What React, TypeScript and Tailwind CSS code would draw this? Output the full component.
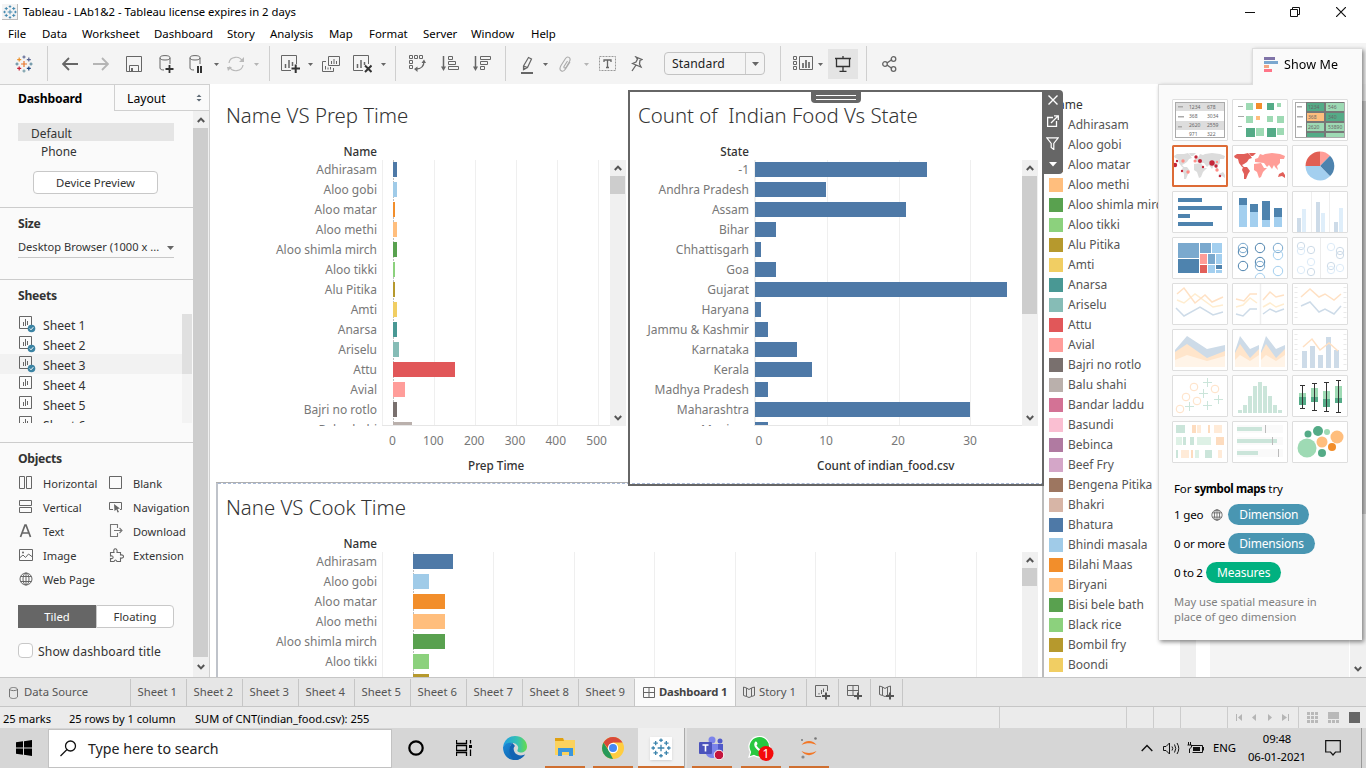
import type { ReactNode } from "react";

type Box = { w: number; h: number; vb?: string; className?: string; children: ReactNode };

function Ico({ w, h, vb, className, children }: Box) {
  return (
    <svg width={w} height={h} viewBox={vb ?? `0 0 ${w} ${h}`} fill="none" className={`shrink-0 ${className ?? ""}`}>
      {children}
    </svg>
  );
}

const palette = [
  "#4e79a7", "#a0cbe8", "#f28e2b", "#ffbe7d", "#59a14f", "#8cd17d", "#b6992d", "#f1ce63", "#499894", "#86bcb6",
  "#e15759", "#ff9d9a", "#79706e", "#bab0ac", "#d37295", "#fabfd2", "#b07aa1", "#d4a6c8", "#9d7660", "#d7b5a6",
];

const foods = [
  "Adhirasam", "Aloo gobi", "Aloo matar", "Aloo methi", "Aloo shimla mirch", "Aloo tikki", "Alu Pitika", "Amti",
  "Anarsa", "Ariselu", "Attu", "Avial", "Bajri no rotlo", "Balu shahi", "Bandar laddu", "Basundi", "Bebinca",
  "Beef Fry", "Bengena Pitika", "Bhakri", "Bhatura", "Bhindi masala", "Bilahi Maas", "Biryani", "Bisi bele bath",
  "Black rice", "Bombil fry", "Boondi",
];

const states = [
  "-1", "Andhra Pradesh", "Assam", "Bihar", "Chhattisgarh", "Goa", "Gujarat", "Haryana", "Jammu & Kashmir",
  "Karnataka", "Kerala", "Madhya Pradesh", "Maharashtra", "Manipur",
];

/* ---------- toolbar ---------- */

function Sparkle({ s, multi }: { s: number; multi?: boolean }) {
  const c = multi
    ? ["#e8762c", "#5b6591", "#7199a6", "#5b879b", "#eb912c", "#1f447e", "#59879b", "#c72037", "#5b6591"]
    : Array(9).fill("#3d85ad");
  const p: [number, number, number][] = [
    [9, 9, 3], [9, 2, 1.6], [9, 16, 1.6], [2, 9, 1.6], [4.2, 4.6, 2], [13.8, 13.4, 2], [16, 9, 1.6], [4.2, 13.4, 2], [13.8, 4.6, 2],
  ];
  return (
    <Ico w={s} h={s} vb="0 0 18 18">
      {p.map(([x, y, r], i) => (
        <path key={i} d={`M${x - r} ${y}H${x + r}M${x} ${y - r}V${y + r}`} stroke={c[i]} strokeWidth="1.2" />
      ))}
    </Ico>
  );
}

function Cell({ w, children }: { w: number; children?: ReactNode }) {
  return (
    <div className="flex h-full shrink-0 items-center justify-center" style={{ width: w }}>
      {children}
    </div>
  );
}

const Sep = () => <div className="h-[35px] w-px shrink-0 bg-[#cfcfcf]" />;

function Caret({ light }: { light?: boolean }) {
  return (
    <Ico w={5} h={3} className="mt-px">
      <path d="M0 0H5L2.5 3Z" fill={light ? "#b5b5b5" : "#666"} />
    </Ico>
  );
}

function Toolbar() {
  const g = "#666";
  return (
    <div className="flex h-[41px] shrink-0 items-center bg-[#f4f4f4]">
      <Cell w={47}><Sparkle s={18} multi /></Cell>
      <Sep />
      <Cell w={7} />
      <Cell w={30}><Ico w={16} h={14}><path d="M16 7H1M7 1L1 7L7 13" stroke={g} strokeWidth="1.8" /></Ico></Cell>
      <Cell w={32}><Ico w={16} h={14}><path d="M0 7H15M9 1L15 7L9 13" stroke="#b5b5b5" strokeWidth="1.8" /></Ico></Cell>
      <Cell w={34}><Ico w={16} h={16}><path d="M.5 .5H15.5V15.5H.5ZM3.5 15V9.5H12.5V15M6 15V12.5" stroke={g} /><path d="M5 12h2v3h-2z" fill={g} /></Ico></Cell>
      <Cell w={30}>
        <Ico w={16} h={18}>
          <ellipse cx="7" cy="2.8" rx="5" ry="2.2" stroke={g} /><path d="M2 3V13C2 14.5 4 15 6 15M12 3V9" stroke={g} />
          <path d="M7.500 14H15.500M11.500 10V18" stroke="#333" strokeWidth="1.8" />
        </Ico>
      </Cell>
      <Cell w={30}>
        <Ico w={16} h={18}>
          <ellipse cx="7" cy="2.8" rx="5" ry="2.2" stroke={g} /><path d="M2 3V13C2 14.5 4 15 6 15M12 3V9" stroke={g} />
          <path d="M10 11V18M13 11V18" stroke="#333" strokeWidth="2" />
        </Ico>
      </Cell>
      <Cell w={11}><Caret /></Cell>
      <Cell w={28}>
        <Ico w={18} h={16}>
          <path d="M2 7A7 6.5 0 0 1 15.5 5.5M16 9A7 6.5 0 0 1 2.5 10.5" stroke="#b9b9b9" strokeWidth="1.2" />
          <path d="M12 6H17V1ZM0 11H5L1 15Z" fill="#b9b9b9" />
        </Ico>
      </Cell>
      <Cell w={13}><Caret light /></Cell>
      <Cell w={6} />
      <Sep />
      <Cell w={5} />
      <Cell w={30}>
        <Ico w={19} h={18}>
          <path d="M15.500 9V.5H.5V15.5H10" stroke={g} /><path d="M4.5 9V13M8 5V13M11.5 7V11" stroke={g} strokeWidth="1.5" />
          <path d="M10.500 13.500H19M14.700 9.500V18" stroke="#333" strokeWidth="2" />
        </Ico>
      </Cell>
      <Cell w={11}><Caret /></Cell>
      <Cell w={30}>
        <Ico w={18} h={16}>
          <path d="M6.500 .5H17.500V9.500H6.500ZM4 5.500H.5V15.500H11.500V12" stroke={g} />
          <path d="M9.500 5V8M12 3V8M14.500 5V8M3.500 10V13.500M6 11.500V13.500M8.500 11V13.500" stroke={g} />
        </Ico>
      </Cell>
      <Cell w={32}>
        <Ico w={19} h={18}>
          <path d="M15.500 9V.5H.5V15.5H10" stroke={g} /><path d="M4.5 9V13M8 5V13M11.5 7V10" stroke={g} strokeWidth="1.500" />
          <path d="M12 10.500L18.500 17M18.500 10.500L12 17" stroke="#333" strokeWidth="2" />
        </Ico>
      </Cell>
      <Cell w={10}><Caret /></Cell>
      <Cell w={7} />
      <Sep />
      <Cell w={6} />
      <Cell w={30}>
        <Ico w={17} h={17}>
          <path d="M.5 .5H3.500V3.500H.5ZM5.500 .5H8.500V3.500H5.500ZM10.500 .5H13.500V3.500H10.500ZM.5 5.500H3.500V8.500H.5ZM.5 10.500H3.500V13.500H.5Z" stroke={g} />
          <path d="M15 6C15 11 12 14 7 14" stroke={g} strokeWidth="1.300" /><path d="M12.500 8L15 4.500L17 8ZM8.500 11.500V17L5 14Z" fill={g} />
        </Ico>
      </Cell>
      <Cell w={36}>
        <Ico w={18} h={15}>
          <path d="M2.500 0V12" stroke={g} strokeWidth="1.500" /><path d="M0 10.500H5L2.500 15Z" fill={g} />
          <path d="M7.500 .5H11.500V3.500H7.500ZM7.500 5.500H14.500V8.500H7.500ZM7.500 10.500H17.500V13.500H7.500Z" stroke={g} />
        </Ico>
      </Cell>
      <Cell w={28}>
        <Ico w={18} h={15}>
          <path d="M2.500 0V12" stroke={g} strokeWidth="1.500" /><path d="M0 10.500H5L2.500 15Z" fill={g} />
          <path d="M7.500 .5H17.500V3.500H7.500ZM7.500 5.500H14.500V8.500H7.500ZM7.500 10.500H11.500V13.500H7.500Z" stroke={g} />
        </Ico>
      </Cell>
      <Cell w={9} />
      <Sep />
      <Cell w={7} />
      <Cell w={28}>
        <Ico w={13} h={18} className="mt-0.5">
          <path d="M0 17H12" stroke={g} strokeWidth="2" /><path d="M2.500 10L7.500 1.500L10.500 3L6.500 11.500L2.500 13.500ZM2.500 10L6.500 11.500" stroke={g} strokeWidth="1.200" />
          <path d="M2 11L5.500 12.500L2 14.500Z" fill={g} />
        </Ico>
      </Cell>
      <Cell w={9}><Caret /></Cell>
      <Cell w={30}>
        <Ico w={13} h={16}>
          <path d="M8.500 5L5 10.500C4.500 12 6 12.500 7 11.500L10.500 5.500C12.500 1.500 8.500 -.5 6.500 2.500L2 9.500C-1 15 4 17 6.500 13L11 6" stroke="#aaa" strokeWidth="1.100" />
        </Ico>
      </Cell>
      <Cell w={12}><Caret light /></Cell>
      <Cell w={30}>
        <Ico w={17} h={16}>
          <path d="M.5 .5H16.500V14.500H.5Z" stroke="#999" strokeDasharray="2 1" />
          <path d="M5 6V4H12V6M8.500 4V11.500M7 11.500H10" stroke="#666" strokeWidth="1.300" />
        </Ico>
      </Cell>
      <Cell w={30}>
        <Ico w={12} h={16}>
          <path d="M5 1L11 3.500L9 4.500L8.500 8L10 11L1.500 7.500L5 6L6.500 3ZM5 9L1 15" stroke={g} strokeWidth="1.300" />
        </Ico>
      </Cell>
      <Cell w={12} />
      <div className="flex h-[23px] w-[101px] shrink-0 items-center rounded-sm border border-[#c3c3c3] text-[12.200px] text-[#222]">
        <span className="flex-1 pt-[2px] pl-[7px] tracking-[0.1px]">Standard</span>
        <span className="flex h-full w-[19px] items-center justify-center border-l border-[#ccc]">
          <Ico w={7} h={4}><path d="M0 0H7L3.500 4Z" fill={g} /></Ico>
        </span>
      </div>
      <Cell w={15} />
      <Sep />
      <Cell w={9} />
      <Cell w={26}>
        <Ico w={20} h={15}>
          <path d="M6.500 .5H19.500V13.500H6.500ZM.5 .5H3.500V3.500H.5ZM.5 5.500H3.500V8.500H.5ZM.5 10.500H3.500V13.500H.5Z" stroke={g} />
          <path d="M10 7V12M13 4V12M16 6V12" stroke={g} strokeWidth="1.700" />
        </Ico>
      </Cell>
      <Cell w={9}><Caret /></Cell>
      <Cell w={3} />
      <div className="flex h-[30px] w-[30px] shrink-0 items-center justify-center bg-[#e4e4e4]">
        <Ico w={18} h={16}>
          <path d="M1 2.500H17M2.500 2.500V10.500H15.500V2.500M9 0V2M9 11V15M5.500 15.300H12.500" stroke="#333" strokeWidth="1.300" />
        </Ico>
      </div>
      <Cell w={8} />
      <Sep />
      <Cell w={7} />
      <Cell w={30}>
        <Ico w={15} h={16}>
          <path d="M5 7L10 3.500M5 9L10 12.500" stroke={g} strokeWidth="1.500" />
          <circle cx="3" cy="8" r="2.300" stroke={g} strokeWidth="1.300" /><circle cx="11.500" cy="3" r="2.300" stroke={g} strokeWidth="1.300" />
          <circle cx="11.500" cy="13" r="2.300" stroke={g} strokeWidth="1.300" />
        </Ico>
      </Cell>
    </div>
  );
}

/* ---------- sidebar ---------- */

const Chev = ({ up }: { up?: boolean }) => (
  <Ico w={8} h={6}><path d={up ? "M.8 5L4 1.600L7.200 5" : "M.8 1L4 4.400L7.200 1"} stroke="#555" strokeWidth="2" /></Ico>
);

function SheetIcon({ used }: { used?: boolean }) {
  return (
    <Ico w={17} h={17} className="mt-px">
      <path d="M.5 .5H12.500V12.500H.5Z" stroke="#666" /><path d="M4.500 6V10M6.500 3V10M8.500 5V9" stroke="#666" />
      {used && <><circle cx="12.500" cy="12.500" r="3.800" fill="#3b83a3" /><path d="M10.800 12.500L12 13.800L14.300 11.200" stroke="#fff" /></>}
    </Ico>
  );
}

const objIcons: Record<string, ReactNode> = {
  Horizontal: <path d="M.5 .5H5.500V12.500H.5ZM7.500 .5H12.500V12.500H7.500Z" stroke="#666" />,
  Blank: <path d="M.5 .5H12.500V12.500H.5Z" stroke="#666" />,
  Vertical: <path d="M.5 .5H12.500V5.500H.5ZM.5 7.500H12.500V12.500H.5Z" stroke="#666" />,
  Navigation: <><path d="M4 9.500H.5V2.500H12.500V9.500H11" stroke="#666" /><path d="M5 4L11 8.500L8.500 9L10 12L8.500 12.500L7.500 9.500L5.500 11Z" fill="#666" /></>,
  Text: <path d="M1.500 13L6 1H7L11.500 13M3 9H10" stroke="#666" strokeWidth="1.700" />,
  Download: <path d="M8.500 4V.5H1.500V12.500H8.500V9M5 6.500H13M10.500 4L13 6.500L10.500 9" stroke="#777" strokeWidth="1.100" />,
  Image: <><path d="M.5 1.500H13.500V12.500H.5ZM.5 10L4 7L6.500 9.500L9.500 6L13.500 9" stroke="#666" /><circle cx="4" cy="4.500" r="1" fill="#666" /></>,
  Extension: <path d="M1.500 13.500V10.500C5 11.500 5 7 1.500 8V4.500H5C3.500 -.5 9 -.5 8 4.500H11.500V7C15.500 6 15.500 11 11.500 10V13.500H8C7 11.500 6 11.500 5 13.500Z" stroke="#666" strokeWidth="1.100" />,
  "Web Page": <><circle cx="7" cy="7" r="6" stroke="#666" /><ellipse cx="7" cy="7" rx="3" ry="6" stroke="#666" /><path d="M7 1V13M1.500 4.500H12.500M1.500 9.500H12.500" stroke="#666" /></>,
};

function ObjItem({ name, w }: { name: string; w: number }) {
  return (
    <div className="flex h-6 items-center" style={{ width: w }}>
      <span className="flex w-6 shrink-0 pb-[3px]"><Ico w={15} h={14}>{objIcons[name]}</Ico></span>
      <span className="text-[11.100px]">{name}</span>
    </div>
  );
}

function Sidebar() {
  return (
    <aside className="flex w-[210px] shrink-0 flex-col border-r border-[#d0d0d0] bg-[#fafafa] text-[12.200px] text-[#333]">
      <div className="flex h-[27px] shrink-0 border-t border-[#d0d0d0] text-black">
        <div className="w-[114px] pt-[5px] pl-[18px] font-bold tracking-[-0.2px]">Dashboard</div>
        <div className="flex flex-1 items-center border-b border-l border-[#d0d0d0] pr-[7px] pl-3">
          <span className="flex-1 pt-[3px]">Layout</span>
          <Ico w={6} h={8}><path d="M.5 3H5.500L3 .5ZM.5 5H5.500L3 7.500Z" fill="#5f6b76" /></Ico>
        </div>
      </div>
      <div className="flex min-h-0 flex-1">
        <div className="flex w-[193px] shrink-0 flex-col">
          <div className="h-[97px] shrink-0 border-b border-[#ccc] pt-3 pl-[18px]">
            <div className="h-[18px] w-[156px] bg-[#e5e5e5] pl-[13px] leading-[20px] text-[11.900px]">Default</div>
            <div className="h-[19px] pl-[23px] leading-[21px] text-[11.900px]">Phone</div>
            <div className="mt-[11px] ml-[15px] flex h-[23px] w-[125px] items-center justify-center rounded-sm border border-[#c8c8c8] bg-white pt-px text-[11.300px]">Device Preview</div>
          </div>
          <div className="h-[72px] shrink-0 border-b border-[#ccc] pt-[7px] pl-[18px]">
            <div className="font-bold tracking-[-0.3px] leading-[18px]">Size</div>
            <div className="mt-1.5 flex h-[19px] w-[156px] items-center border-b border-[#c8c8c8] pb-px text-[11.100px]">
              <span className="flex-1 pb-px">Desktop Browser (1000 x ...</span>
              <Ico w={7} h={4}><path d="M0 0H7L3.500 4Z" fill="#666" /></Ico>
            </div>
          </div>
          <div className="h-[163px] shrink-0 border-b border-[#ccc] pt-[7px]">
            <div className="pl-[18px] font-bold tracking-[-0.3px] leading-[18px]">Sheets</div>
            <div className="mt-[9px] flex h-[109px]">
              <div className="w-[182px] overflow-hidden">
                {[1, 2, 3, 4, 5, 6].map((n) => (
                  <div key={n} className={`flex h-5 items-center pl-[19px] ${n === 3 ? "bg-[#f2f2f2]" : ""}`}>
                    <SheetIcon used={n < 4} />
                    <span className="pt-[5px] pl-[7px]">Sheet {n}</span>
                  </div>
                ))}
              </div>
              <div className="w-[10px] bg-[#f3f3f3]"><div className="h-[60px] bg-[#e0e0e0]" /></div>
            </div>
          </div>
          <div className="pt-[7px] pl-[18px]">
            <div className="font-bold tracking-[-0.3px] leading-[18px]">Objects</div>
            <div className="mt-[4px] flex flex-wrap pl-px">
              {["Horizontal", "Blank", "Vertical", "Navigation", "Text", "Download", "Image", "Extension", "Web Page"].map((n, i) => (
                <ObjItem key={n} name={n} w={i % 2 ? 84 : 90} />
              ))}
            </div>
            <div className="mt-[13px] flex h-[23px] w-[156px] text-[11.300px]">
              <div className="flex w-[78px] items-center justify-center bg-[#666] pt-px text-white">Tiled</div>
              <div className="flex flex-1 items-center justify-center rounded-r-sm border border-[#c8c8c8] bg-white pt-px">Floating</div>
            </div>
            <div className="mt-[15px] flex h-[15px] items-center">
              <span className="mr-[5px] h-[15px] w-[15px] rounded-sm border border-[#c8c8c8] bg-white" />
              <span className="pt-[3px] tracking-[0.1px]">Show dashboard title</span>
            </div>
          </div>
        </div>
        <div className="flex flex-1 flex-col bg-[#f0f0f0]">
          <div className="flex h-[17px] items-center justify-center"><Chev up /></div>
          <div className="mr-px flex-1 bg-[#cdcdcd]" />
          <div className="flex h-5 items-center justify-center"><Chev /></div>
        </div>
      </div>
    </aside>
  );
}

/* ---------- charts ---------- */

type ChartProps = {
  title: string; header: string; labels: string[]; bars: number[]; colors: string[]; zero: number; step: number; lines: number;
  labelW: number; plotW: number; height: number; thumb: number; down?: boolean;
};

function Chart(p: ChartProps) {
  return (
    <div>
      <div className="h-[37px] pl-[9px] text-[20.400px] leading-[32px] font-light text-[#333]">{p.title}</div>
      <div className="h-5 pt-[7px] text-right text-[11.700px] leading-[16px] font-medium text-[#333]" style={{ width: p.labelW }}>{p.header}</div>
      <div className="mt-[4px] flex overflow-hidden" style={{ height: p.height }}>
        <div className="shrink-0 overflow-hidden text-right text-[12px] text-[#787878]" style={{ width: p.labelW }}>
          {p.labels.map((l) => <div key={l} className="h-5 leading-[20px]">{l}</div>)}
        </div>
        <svg width={p.plotW} height={p.height} className="ml-[5px] shrink-0">
          <path d={`M.5 0V${p.height}`} stroke="#efefef" />
          {Array.from({ length: p.lines }, (_, i) => (
            <path key={i} d={`M${Math.round(p.zero + i * p.step) + 0.5} 0V${p.height}`} stroke={i === 0 && p.zero > 2 ? "#bdbdbd" : "#efefef"} strokeDasharray={i === 0 && p.zero > 2 ? "2 1" : undefined} />
          ))}
          {p.bars.map((b, i) => <rect key={i} x={p.zero} y={i * 20 + 2} width={b} height="15" fill={p.colors[i]} />)}
          {p.down && <path d={`M0 ${p.height - 0.5}H${p.plotW}`} stroke="#e6e6e6" />}
        </svg>
        <div className="flex w-4 shrink-0 flex-col bg-[#f0f0f0]">
          <div className="flex h-4 shrink-0 items-center justify-center"><Chev up /></div>
          <div className="mr-px shrink-0 bg-[#cdcdcd]" style={{ height: p.thumb }} />
          <div className="flex-1" />
          {p.down && <div className="flex h-4 items-center justify-center"><Chev /></div>}
        </div>
      </div>
    </div>
  );
}

type AxisProps = { first: number; step: number; ticks: string[]; pad: number; label: string; labelPad: number };

function Axis({ first, step, ticks, pad, label, labelPad }: AxisProps) {
  return (
    <>
      <div className="flex pt-[7px] text-[12px] leading-[16px] text-[#787878]" style={{ paddingLeft: pad }}>
        {ticks.map((t, i) => <span key={t} className="shrink-0 text-center" style={{ width: i ? step : first }}>{t}</span>)}
      </div>
      <div className="pt-[8px] text-[11.700px] leading-[16px] font-medium text-[#333]" style={{ paddingLeft: labelPad }}>{label}</div>
    </>
  );
}

function Workspace() {
  const blue = states.map(() => "#4e79a7");
  return (
    <div className="flex min-w-0 flex-1 bg-white">
      <div className="relative z-10 flex w-[834px] shrink-0 flex-col overflow-hidden pl-[6px]">
        <div className="flex h-[402px] shrink-0 pt-[6px]">
          <div className="h-[393px] w-[412px] border-b border-[#b0b0b0] pl-px pt-[9px]">
            <Chart title="Name VS Prep Time" header="Name" labels={foods.slice(0, 14)} bars={[4, 4, 2, 4, 4, 2, 2, 4, 4, 6, 62, 12, 4, 19]} colors={palette} zero={11} step={41} lines={6} labelW={160} plotW={228} height={266} thumb={18} down />
            <Axis first={41} step={40.800} ticks={["0", "100", "200", "300", "400", "500"]} pad={155} label="Prep Time" labelPad={251} />
          </div>
          <div className="relative h-[396px] w-[416px] border-2 border-[#666]">
            <div className="pt-[7px]">
              <div className="-ml-px">
                <Chart title="Count of  Indian Food Vs State" header="State" labels={states} bars={[172, 71, 151, 21, 6, 21, 252, 6, 13, 42, 57, 13, 215, 13]} colors={blue} zero={1} step={71.800} lines={4} labelW={120} plotW={268} height={266} thumb={138} down />
                <Axis first={62} step={72} ticks={["0", "10", "20", "30"]} pad={99} label="Count of indian_food.csv" labelPad={188} />
              </div>
            </div>
            <div className="absolute -top-px left-[181px] flex h-[12px] w-[50px] flex-col justify-center gap-[3px] rounded-b-sm bg-[#666] px-[5px]">
              <span className="h-px bg-white" /><span className="h-px bg-white" />
            </div>
          </div>
        </div>
        <div className="-mt-[3px] flex-1 border-l-2 border-[#bfc3ca]">
          <div className="h-px border-t border-dashed border-[#a9b9d6]" />
          <div className="-ml-px pt-[7px]">
            <Chart title="Nane VS Cook Time" header="Name" labels={foods.slice(0, 6)} bars={[40, 16, 32, 32, 32, 16, 16]} colors={palette} zero={31} step={80.400} lines={8} labelW={160} plotW={640} height={125} thumb={18} />
          </div>
        </div>
      </div>
      <div className="relative z-20 -ml-[2px] flex w-[138px] shrink-0 pt-[11px] pl-[7px]">
        <div>
          <div className="h-5 text-[12px] leading-[20px] text-[#333]">Name</div>
          {foods.map((f, i) => (
            <div key={f} className="flex h-5 items-center text-[12px] text-[#555]">
              <span className="mr-[5px] h-[14px] w-[14px]" style={{ background: palette[i % 20] }} />
              {f}
            </div>
          ))}
        </div>
        <div className="absolute top-[402px] bottom-0 left-0 w-[2px] bg-[#bbb]" />
        <div className="absolute top-[6px] left-0 flex h-[84px] w-[21px] flex-col items-center justify-between rounded-r-sm bg-[#666] py-[5px]">
          <Ico w={10} h={10}><path d="M.5 .5L9.500 9.500M9.500 .5L.5 9.500" stroke="#fff" strokeWidth="1.400" /></Ico>
          <Ico w={12} h={12}><path d="M6 2.500H.6V11.400H9.500V6M4 8L10.500 1.500M7 .8H11.300V5" stroke="#fff" strokeWidth="1.300" /></Ico>
          <Ico w={13} h={13}><path d="M.8 .8H12.200L7.800 6.500V12.500L5.200 10.500V6.500Z" stroke="#fff" strokeWidth="1.200" /></Ico>
          <Ico w={8} h={9}><path d="M0 2H8L4 6.500Z" fill="#fff" /></Ico>
        </div>
      </div>
      <div className="w-4 bg-[#efefef]" />
      <div className="w-[14px]" />
      <div className="w-[139px] bg-[#f4f4f4]" />
      <div className="flex flex-1 flex-col border-l border-white bg-[#f0f0f0]">
        <div className="h-[17px]" />
        <div className="h-[413px] bg-[#cdcdcd]" />
        <div className="flex-1" />
        <div className="flex h-4 items-center justify-center"><Chev /></div>
      </div>
    </div>
  );
}

/* ---------- Show Me ---------- */

const NA = "M2 11L5 9L12 9L16 8L18 10L20 13L17 14L15 17L12 19L10 20L13 23L10 22L7 18L6 14L3 13ZM17 8L24 8L21 11L19 11ZM11 22L15 22L18 26L16 29L14 34L12 34L12 29L10 25Z";
const EU = "M22 19L29 18L32 23L35 23L31 27L29 32L27 33L25 27L22 25ZM23 17V14L26 13L28 9L31 10L33 9L40 8L48 9L53 11L52 14L48 14L48 18L45 21L46 25L43 22L42 20L40 24L37 20L35 22L32 18Z";
const AU = "M47 29L51 27L53 30L53 33L50 31L46 32Z";

function Rects({ d }: { d: [number, number, number, number, string][] }) {
  return <>{d.map(([x, y, w, h, c], i) => <rect key={i} x={x} y={y} width={w} height={h} fill={c} />)}</>;
}
function Rings({ d, c }: { d: number[][]; c: string[] }) {
  return <>{d.map(([x, y, k], i) => <circle key={i} cx={x} cy={y} r="4.700" stroke={c[k]} />)}</>;
}
const T = ({ x, y, children }: { x: number; y: number; children: string }) => (
  <text x={x} y={y} fontSize="5" fill="#666" fontFamily="Noto Sans, sans-serif">{children}</text>
);

const G = "#9edab4", DG = "#54ab87", B1 = "#4e83ae", B2 = "#a3cfef", FB = "#cddbe8", FO = "#ffe1c4", FG = "#cbe5da";

const thumbs: ReactNode[] = [
  <>
    <rect x="3.500" y="3.500" width="49" height="35" fill="#fff" stroke="#aaa" /><Rects d={[[4, 4, 48, 8, "#ddd"], [4, 22, 48, 9, "#ddd"], [6, 7, 5, 1.500, "#aaa"], [6, 17, 6, 1.500, "#aaa"], [6, 27, 4, 1.500, "#aaa"]]} />
    <T x={17} y={10}>1234</T><T x={35} y={10}>678</T><T x={17} y={19}>368</T><T x={35} y={19}>3034</T><T x={17} y={28}>2620</T><T x={35} y={28}>2559</T><T x={17} y={36.500}>971</T><T x={35} y={36.500}>322</T>
  </>,
  <Rects d={[[6, 7, 5, 1, "#aaa"], [6, 17, 6, 1, "#aaa"], [6, 27, 4, 1, "#aaa"], [14, 4, 7, 7, G], [24, 4, 6, 6, "#f28e2b"], [35, 4, 7, 7, DG], [45, 4, 4, 4, G], [14, 17, 7, 7, G], [24, 17, 4, 4, "#ffbe7d"], [35, 17, 6, 6, G], [45, 17, 7, 7, G], [14, 29, 9, 9, DG], [24, 29, 8, 8, G], [35, 29, 9, 9, DG], [45, 29, 7, 7, G]]} />,
  <>
    <rect x="3.500" y="3.500" width="49" height="35" fill="#fff" stroke="#aaa" />
    <Rects d={[[5, 7, 5, 1.500, "#aaa"], [5, 17, 6, 1.500, "#aaa"], [5, 27, 5, 1.500, "#aaa"], [14, 3, 38, 35, "#777"], [15, 4, 17, 8, DG], [34, 4, 18, 8, G], [15, 14, 17, 8, "#ffbe7d"], [34, 14, 18, 8, DG], [15, 24, 17, 8, G], [34, 24, 18, 8, G], [15, 34, 17, 4, DG], [34, 34, 18, 4, G]]} />
    <T x={16} y={10}>1234</T><T x={36} y={10}>546</T><T x={16} y={20}>368</T><T x={36} y={20}>340</T><T x={16} y={30}>2620</T><T x={36} y={30}>53890</T>
  </>,
  <>
    <path d={NA + EU + AU} fill="#dcdcdc" />
    {([[3, 20, 2.200, 0], [5, 16, 1.200, 0], [11, 16, 1.700, 1], [10, 26, 1.200, 0], [16, 27, 1.700, 1], [24, 12, 1.700, 0], [23, 16, 1.500, 1], [28, 16, 2, 0], [31, 22, 1.200, 0], [40, 18, 2.700, 0], [45, 17, 1.200, 1], [44, 21, 1.700, 0], [45, 25, 1.700, 1], [48, 31, 1.200, 0]] as number[][]).map(([x, y, r, k], i) => <circle key={i} cx={x} cy={y} r={r} fill={k ? "#ff8e87" : "#c52639"} />)}
  </>,
  <><path d={NA} fill="#e15f59" /><path d={EU} fill="#ff9d97" /><path d={AU} fill="#e15f59" /></>,
  <>
    <path d="M28 21H13.500A14.500 14.500 0 0 1 28 6.500Z" fill="#e15f54" /><path d="M28 21V6.500A14.500 14.500 0 0 1 38 10.700Z" fill="#ff9d97" />
    <path d="M28 21L38 10.700A14.500 14.500 0 0 1 38 31.300Z" fill={B1} /><path d="M28 21L38 31.300A14.500 14.500 0 0 1 13.500 21Z" fill={B2} />
  </>,
  <Rects d={[[6, 7, 24, 4, B1], [6, 15, 44, 4, B1], [6, 23, 12, 4, B1], [6, 31, 35, 4, B1]]} />,
  <Rects d={[[7, 7, 8, 7, B1], [7, 14, 8, 22, B2], [18, 13, 8, 8, B1], [18, 21, 8, 15, B2], [30, 10, 8, 19, B1], [30, 29, 8, 7, B2], [42, 17, 8, 9, B1], [42, 26, 8, 10, B2]]} />,
  <Rects d={[[19, 1, 1, 40, "#eee"], [37, 1, 1, 40, "#eee"], [5, 27, 4, 14, FB], [10, 18, 4, 23, "#dfeefa"], [24, 11, 4, 30, FB], [29, 22, 4, 19, "#dfeefa"], [42, 31, 4, 10, FB], [47, 17, 4, 24, "#dfeefa"]]} />,
  <Rects d={[[6, 6, 21, 15, "#7aa9ce"], [6, 22, 21, 14, B1], [28, 6, 11, 10, "#7aa9ce"], [40, 6, 10, 10, B2], [28, 17, 7, 10, "#ff9d97"], [36, 17, 7, 10, "#7aa9ce"], [44, 17, 6, 10, B2], [28, 28, 7, 8, "#e15f59"], [36, 28, 7, 8, B2], [44, 28, 6, 4, B1], [44, 33, 6, 3, B2]]} />,
  <Rings c={["#4e83ae", "#7aa9ce", B2]} d={[[11, 11, 1], [11, 15, 0], [11, 29, 0], [28, 11, 0], [28, 25, 0], [28, 29, 1], [46, 11, 1], [46, 18, 2], [46, 34, 2], [28, 41, 2]]} />,
  <>
    <path d="M28.500 1V41" stroke="#ececec" />
    {([[9, 9, 0], [9, 14, 1], [19, 13, 0], [19, 25, 1], [9, 33, 1], [19, 35, 0], [39, 10, 1], [48, 14, 0], [48, 18, 0], [39, 29, 0], [48, 31, 1], [39, 33, 1]]).map(([x, y, k], i) => <circle key={i} cx={x} cy={y} r="3.700" stroke={k ? "#dcebf8" : FB} />)}
  </>,
  <g strokeWidth="1.500"><path d="M5 17L12 20L23 11L41 24L51 22" stroke="#ffedd0" /><path d="M5 11L12 5L23 20L33 12L40 19L51 14" stroke={FO} /><path d="M4 25L12 33L28 24L41 32L51 29" stroke={FB} /></g>,
  <g strokeWidth="1.500"><path d="M28.500 1V41" stroke="#eee" /><path d="M4 24L11 22L18 15L25 20M31 24L38 20L44 24L52 21" stroke="#ffedd0" /><path d="M4 16L12 18L18 11H25M31 17L38 9L44 14L52 12" stroke={FO} /><path d="M4 31L11 33L18 26H25M31 31L38 26L44 29L52 26" stroke={FB} /></g>,
  <g strokeWidth="1.500"><path d="M9 14L18 6L27 14L33 11L42 17L49 11" stroke={FO} /><path d="M9 23L18 19L27 29L33 26L42 31L49 23" stroke={FB} /><path d="M4 4V38M53 4V38" stroke="#eaeaea" strokeWidth="3" strokeDasharray="1 4" /></g>,
  <><path d="M3 21L15 7L35 20L53 16V38H3Z" fill={FB} /><path d="M3 23L15 15L35 29L53 22V38H3Z" fill="#ffe5cb" /><path d="M3 31L15 26L35 32L53 27V38H3Z" fill="#fff4e8" /></>,
  <>{[3, 29].map((x) => <g key={x} transform={`translate(${x} 0)`}><path d="M0 22L5 7L15 20L24 16V38H0Z" fill={FB} /><path d="M0 24L5 15L15 29L24 20V38H0Z" fill="#ffe5cb" /><path d="M0 31L5 26L15 32L24 26V38H0Z" fill="#fff4e8" /></g>)}</>,
  <><path d="M4 5V38M53 5V38" stroke="#eaeaea" strokeWidth="3" strokeDasharray="1 4" /><Rects d={[[10, 22, 5, 17, FB], [18, 17, 5, 22, FB], [26, 26, 5, 13, FB], [34, 8, 5, 31, FB], [42, 21, 5, 18, FB]]} /><path d="M11 18L20 10L28 21L37 14L46 22" stroke={FO} strokeWidth="1.500" /></>,
  <>
    {[[8, 34], [14, 22], [22, 12], [25, 26], [43, 14]].map(([x, y]) => <circle key={x} cx={x} cy={y} r="3.800" stroke={FO} />)}
    {[[35, 7], [31, 18], [17, 31], [35, 30], [46, 24]].map(([x, y]) => <path key={y} d={`M${x - 4} ${y + 0.5}H${x + 5}M${x + 0.5} ${y - 4}V${y + 5}`} stroke={FG} />)}
  </>,
  <Rects d={[[6, 35, 4, 3, FG], [11, 30, 4, 8, FG], [16, 21, 4, 17, FG], [21, 11, 4, 27, FG], [26, 7, 4, 31, FG], [31, 11, 4, 27, FG], [36, 21, 4, 17, FG], [41, 30, 4, 8, FG], [46, 35, 4, 3, FG]]} />,
  <>
    <Rects d={[[7, 18, 7, 4, G], [7, 22, 7, 8, DG], [19, 13, 7, 9, G], [19, 22, 7, 5, DG], [31, 16, 7, 8, G], [31, 24, 7, 8, DG], [43, 11, 7, 12, G], [43, 23, 7, 5, DG]]} />
    <path d="M10.500 10.500V33.500M22.500 8.500V35.500M34.500 7.500V36.500M46.500 5.500V37.500M8 10.500H13M8 33.500H13M20 8.500H25M20 35.500H25M32 7.500H37M32 36.500H37M44 5.500H49M44 37.500H49" stroke="#333" />
  </>,
  <Rects d={[[4, 4, 9, 8, FG], [20, 4, 4, 8, "#fddcbf"], [25, 4, 4, 8, "#ffebd8"], [36, 4, 2, 8, "#fddcbf"], [42, 4, 8, 8, "#ffebd8"], [4, 16, 6, 8, "#def1e6"], [11, 16, 3, 8, FG], [18, 16, 4, 8, FG], [25, 16, 14, 8, "#def1e6"], [44, 16, 8, 8, "#fddcbf"], [4, 29, 2, 8, FG], [9, 29, 8, 8, "#ffebd8"], [19, 29, 2, 8, "#fddcbf"], [23, 29, 4, 8, "#def1e6"], [33, 29, 7, 8, FG], [46, 29, 4, 8, "#ffebd8"]]} />,
  <Rects d={[[5, 4, 46, 8, "#fafafa"], [5, 16, 46, 8, "#fafafa"], [5, 28, 46, 8, "#fafafa"], [5, 6, 25, 4, FG], [5, 18, 40, 4, FG], [5, 30, 21, 4, FG], [33, 4, 1, 8, "#bbb"], [40, 16, 1, 8, "#bbb"], [46, 28, 1, 8, "#bbb"]]} />,
  <>{([[15, 27, 9.500, G], [16, 13, 3.500, DG], [26, 10, 5, DG], [35, 11, 3, G], [45, 16, 6.500, "#ffbe7d"], [30, 21, 5.500, "#ffbe7d"], [40, 26, 4, "#f28e2b"], [30, 32, 4, DG]] as [number, number, number, string][]).map(([x, y, r, c], i) => <circle key={i} cx={x} cy={y} r={r} fill={c} />)}</>,
];

const Pill = ({ green, children }: { green?: boolean; children: string }) => (
  <span className={`flex h-[21px] items-center rounded-full px-[11px] text-[12px] tracking-[-0.2px] text-white ${green ? "bg-[#00b180]" : "bg-[#4996b2]"}`}>{children}</span>
);

function ShowMe() {
  return (
    <div className="absolute top-[48px] left-[1158px] z-30 w-[204px] text-[11.600px] text-black drop-shadow-[2px_2px_2px_rgba(0,0,0,0.45)]">
      <div className="relative z-10 -mb-px ml-[94px] flex h-[37px] w-[110px] items-center border-t border-l border-[#ddd] bg-[#fafafa] pb-1 pl-[11px] text-[12.500px]">
        <Ico w={14} h={16} className="mr-[6px]"><Rects d={[[0, 0, 11, 3, "#8074a8"], [0, 4, 14, 3, "#7ba7cf"], [0, 8, 5, 3, "#f4a582"], [0, 12, 8, 3, "#ff7588"]]} /></Ico>
        <span className="tracking-[0.1px]">Show Me</span>
      </div>
      <div className="h-[556px] border-t border-l border-[#ddd] bg-[#fafafa] pt-[14px] pl-[13px]">
        <div className="grid w-[176px] grid-cols-3 gap-1">
          {thumbs.map((t, i) => (
            <svg key={i} width="56" height="42" viewBox="0 0 56 42" fill="none">
              <rect x={i === 3 ? 1 : 0.5} y={i === 3 ? 1 : 0.5} width={i === 3 ? 54 : 55} height={i === 3 ? 40 : 41} fill="#fff" />
              {t}
              <rect x={i === 3 ? 1 : 0.5} y={i === 3 ? 1 : 0.5} width={i === 3 ? 54 : 55} height={i === 3 ? 40 : 41} rx=".5" stroke={i === 3 ? "#dd6b36" : "#dedede"} strokeWidth={i === 3 ? 2 : 1} />
            </svg>
          ))}
        </div>
        <div className="pl-[2px]">
          <div className="mt-[18px] leading-[16px] text-[11.500px] tracking-[-0.1px]">For <b className="tracking-[-0.4px]">symbol maps</b> try</div>
          <div className="mt-[7px] flex h-[21px] items-center">
            <span className="mr-2 tracking-[-0.2px]">1 geo</span>
            <Ico w={12} h={12} vb="0 0 14 14" className="mr-[5px]">{objIcons["Web Page"]}</Ico>
            <Pill>Dimension</Pill>
          </div>
          <div className="mt-2 flex h-[21px] items-center gap-[3px]"><span className="tracking-[-0.25px]">0 or more</span><Pill>Dimensions</Pill></div>
          <div className="mt-2 flex h-[21px] items-center gap-[3px]"><span className="w-[29px] tracking-[-0.3px]">0 to 2</span><Pill green>Measures</Pill></div>
          <div className="mt-[11px] text-[11.200px] leading-[15px] text-[#808080]">May use spatial measure in<br />place of geo dimension</div>
        </div>
      </div>
    </div>
  );
}

/* ---------- bottom bars ---------- */

const gridIco = <path d="M.5 .5H11.500V10.500H.5ZM6 .5V10.500M.5 5.500H11.500" stroke="#666" />;
const storyIco = <path d="M.5 1L3.500 2L6 3.500L8.500 2L11.500 1V9.500L8.500 10.500L6 11.500L3.500 10.500L.5 9.500ZM3.500 2V10.500M8.500 2V10.500" stroke="#666" />;
const plusIco = <path d="M7 11H15M11 7.500V14.500" stroke="#555" strokeWidth="2" />;

function SheetTabs() {
  return (
    <div className="flex h-[30px] shrink-0 border-t border-b border-[#c6c6c6] bg-[#e6e6e6] pt-px text-[11.300px] text-[#555]">
      <div className="flex w-[131px] items-center border-r border-[#c6c6c6] pl-[9px]">
        <Ico w={9} h={12} className="mr-[6px]"><path d="M.5 2C2 0 7 0 8.500 2V10C7 12 2 12 .5 10ZM.5 2.500C2 4 7 4 8.500 2.500" stroke="#777" /></Ico>Data Source
      </div>
      {Array.from({ length: 9 }, (_, i) => (
        <div key={i} className="flex w-[56px] shrink-0 items-center border-r border-[#c6c6c6] pl-[6.500px]">Sheet {i + 1}</div>
      ))}
      <div className="-mt-px flex w-[101px] items-center border-r border-[#c6c6c6] bg-[#fafafa] pt-px pl-[8px] font-bold tracking-[-0.2px] text-[#444]">
        <Ico w={12} h={12} className="mr-1">{gridIco}</Ico>Dashboard 1
      </div>
      <div className="flex w-[71px] items-center border-r border-[#c6c6c6] pl-[7px]"><Ico w={12} h={13} className="mr-1">{storyIco}</Ico>Story 1</div>
      <div className="flex w-8 items-center justify-center border-r border-[#c6c6c6]"><Ico w={15} h={15}><path d="M12.500 6V.5H.5V11.500H6M4 8V9.500M6.500 5V9M8.500 3.500V7" stroke="#666" />{plusIco}</Ico></div>
      <div className="flex w-8 items-center justify-center border-r border-[#c6c6c6]"><Ico w={15} h={15}>{gridIco}{plusIco}</Ico></div>
      <div className="flex w-8 items-center justify-center border-r border-[#c6c6c6]"><Ico w={15} h={15}>{storyIco}{plusIco}</Ico></div>
    </div>
  );
}

function StatusBar() {
  return (
    <div className="flex h-[21px] shrink-0 items-center bg-[#ebebeb] text-[11.100px] text-black">
      <span className="w-[66px] pt-[3px] pl-[3px]">25 marks</span>
      <span className="w-[126px] pt-[3px] pl-[3px]">25 rows by 1 column</span>
      <span className="flex-1 pt-[3px] pl-[3px]">SUM of CNT(indian_food.csv): 255</span>
      <div className="h-full w-[127px] border-l border-[#ccc]" />
      <div className="h-full w-[27px] border-l border-[#ccc]" />
      <div className="h-full w-[27px] border-l border-[#ccc]" />
      <div className="h-full w-[47px] border-l border-[#ccc]" />
      <div className="flex h-full w-[71px] items-center justify-center gap-[10px] border-l border-[#ccc] pr-0.5">
        <Ico w={6} h={7}><path d="M0 0H1V7H0ZM6 0V7L2 3.500Z" fill="#b5b5b5" /></Ico>
        <Ico w={5} h={7}><path d="M4 0V7L0 3.500Z" fill="#b5b5b5" /></Ico>
        <Ico w={5} h={7}><path d="M1 0V7L5 3.500Z" fill="#b5b5b5" /></Ico>
        <Ico w={7} h={7}><path d="M6 0H7V7H6ZM0 0V7L5 3.500Z" fill="#b5b5b5" /></Ico>
      </div>
      <div className="flex h-full w-[68px] items-center gap-[10px] border-l border-[#ccc] pl-2">
        <Ico w={11} h={11}>{[0, 4, 8].map((y) => <path key={y} d={`M0 ${y}H3V${y + 3}H0ZM4 ${y}H7V${y + 3}H4ZM8 ${y}H11V${y + 3}H8Z`} fill="#b9b9b9" />)}</Ico>
        <Ico w={11} h={11}><path d="M0 0H11V7H0ZM0 8H3V11H0ZM4 8H7V11H4ZM8 8H11V11H8Z" fill="#b9b9b9" /></Ico>
        <Ico w={11} h={11}><path d="M0 0H11V11H0Z" fill="#666" /></Ico>
      </div>
    </div>
  );
}

function TaskItem({ w, line, bg, children }: { w: number; line?: boolean; bg?: boolean; children: ReactNode }) {
  return (
    <div className={`flex h-full shrink-0 flex-col items-center ${bg ? "bg-[#f0f0f0]" : ""}`} style={{ width: w }}>
      <div className="flex flex-1 items-center pt-0.5">{children}</div>
      <div className={`h-[2px] ${bg ? "w-full" : "w-10"} ${line ? "bg-[#cf6f30]" : ""}`} />
    </div>
  );
}

function Taskbar() {
  return (
    <div className="flex h-10 shrink-0 items-center bg-[#d6d6d6] text-black">
      <div className="flex w-12 justify-center">
        <Ico w={16} h={16}><path d="M0 2.300L7 1.300V7.500H0ZM8 1.200L16 0V7.500H8ZM0 8.500H7V14.700L0 13.700ZM8 8.500H16V16L8 14.800Z" fill="#000" /></Ico>
      </div>
      <div className="flex h-[39px] w-[344px] items-center self-end border border-[#c2c2c2] bg-white pl-[11px] text-[14.200px] text-[#222]">
        <Ico w={17} h={17} className="mr-[11px]"><circle cx="10.500" cy="6" r="5" stroke="#111" strokeWidth="1.300" /><path d="M7 9.500L.5 16" stroke="#111" strokeWidth="1.300" /></Ico>
        Type here to search
      </div>
      <TaskItem w={48}><Ico w={16} h={16}><circle cx="8" cy="8" r="6.700" stroke="#000" strokeWidth="2.200" /></Ico></TaskItem>
      <TaskItem w={48}><Ico w={17} h={16}><path d="M.5 0V3.500H10.500V0M.5 5.500H10.500V10.500H.5ZM.5 16V12.500H10.500V16M14.500 0V3.500M14.500 9.500V16" stroke="#000" strokeWidth="1.300" /><path d="M13 5H16V8H13Z" fill="#000" /></Ico></TaskItem>
      <TaskItem w={54}>
        <Ico w={24} h={24}>
          <defs>
            <linearGradient id="eg" x1="0" x2="1"><stop stopColor="#1e9de4" /><stop offset=".6" stopColor="#35c1b1" /><stop offset="1" stopColor="#66dc4c" /></linearGradient>
            <linearGradient id="eb" x1="0" x2="1" y2="1"><stop stopColor="#1b8ad8" /><stop offset="1" stopColor="#0c59a4" /></linearGradient>
          </defs>
          <path d="M0 11C1 4 6 0 12 0C19 0 24 5 24 10.500C24 15 20 17 17 16.500C14 16 14 14.500 15 13C16 10 13 7 9.500 7C5 7 1 9 0 11Z" fill="url(#eg)" />
          <path d="M0 11C2 7 6 6 9.500 7C7 9 6 13 8 17C10 21 16 22 21.500 18.500C19 22.500 15 24 12 24C5 24 0 19 0 11Z" fill="url(#eb)" />
          <path d="M9.500 7C5 10 5 21 12 24C16 24 20 22 22 18.500C18 20.500 13 19 11.500 16C10 13 10.500 11 12 10Z" fill="#1263b3" />
        </Ico>
      </TaskItem>
      <TaskItem w={45} line>
        <Ico w={22} h={20}><path d="M1 0H9L10.500 2H21V17H1Z" fill="#fbd25d" /><path d="M1 0H9L10 3H1Z" fill="#dfa011" /><path d="M4 18V10H19V18H15V14H8V18Z" fill="#3b96dc" /></Ico>
      </TaskItem>
      <TaskItem w={51} line>
        <Ico w={22} h={22}>
          <circle cx="11" cy="11" r="11" fill="#ffcd40" /><path d="M1.500 5.500L7 14L11 22A11 11 0 0 1 1.500 5.500Z" fill="#27995a" /><path d="M1.500 5.500A11 11 0 0 1 20.500 5.500H11L6.500 12Z" fill="#d9493a" />
          <circle cx="11" cy="11" r="5.200" fill="#fff" /><circle cx="11" cy="11" r="4" fill="#4688f4" />
        </Ico>
      </TaskItem>
      <TaskItem w={46} line bg><div className="flex h-[23px] w-[22px] items-center justify-center bg-white shadow"><Sparkle s={20} /></div></TaskItem>
      <div className="h-full w-[3px] border-l border-[#aaa] bg-[#e0e0e0]" />
      <TaskItem w={49} line>
        <Ico w={26} h={24}>
          <circle cx="13" cy="4" r="3.500" fill="#7b83eb" /><circle cx="21" cy="5" r="2.500" fill="#5059c9" /><path d="M17 8H24V16C24 18 19 19 17 17Z" fill="#5059c9" /><path d="M7 8H19V17C19 23 9 24 7 18Z" fill="#7b83eb" />
          <rect x="0" y="6" width="13" height="12" rx="1" fill="#4b53bc" /><path d="M3.500 9H9.500M6.500 9V15.500" stroke="#fff" strokeWidth="1.600" />
          <circle cx="20" cy="19" r="4.800" fill="#c4143d" stroke="#fff" />
        </Ico>
      </TaskItem>
      <TaskItem w={49} line>
        <Ico w={26} h={25}>
          <path d="M1 21L2.500 16A10.300 10.300 0 1 1 6 19.500Z" fill="#28c840" stroke="#fff" strokeWidth="1.200" /><path d="M7 6C8 5 9 5.500 9.500 8L8.500 9.500C10 12 11.500 13 13 13.500L14.500 12L17 13.500C17 16 14 17 11 15C7 12 5 9 7 6Z" fill="#fff" />
          <circle cx="18" cy="17.500" r="7.500" fill="#f40a0a" /><text x="18" y="22" textAnchor="middle" fontSize="12" fill="#fff" fontFamily="Noto Sans, sans-serif">1</text>
        </Ico>
      </TaskItem>
      <TaskItem w={48} line>
        <Ico w={18} h={22}><path d="M1.500 8C5 2.500 13 2.500 16.500 8C12 5.500 6 5.500 1.500 8ZM1.500 14C5 19.500 13 19.500 16.500 14C12 16.500 6 16.500 1.500 14Z" fill="#f37726" /><circle cx="15.500" cy="1.500" r="1.300" fill="#777" /><circle cx="3" cy="20" r="1.600" fill="#888" /><circle cx="2" cy="3" r="1" fill="#777" /></Ico>
      </TaskItem>
      <div className="flex-1" />
      <Ico w={12} h={8} className="mr-[10px]"><path d="M.7 7L6 1.500L11.300 7" stroke="#111" strokeWidth="1.400" /></Ico>
      <Ico w={17} h={13} className="mr-[7px]"><path d="M.5 4.500H3L6.500 1V12L3 8.500H.5ZM9 4.500Q10.500 6.500 9 8.500M11.500 2.500Q14 6.500 11.500 10.500M14 1Q17.500 6.500 14 12" stroke="#111" /></Ico>
      <Ico w={17} h={12} className="mr-[9px]"><path d="M4.500 3.500H15.500V10.500H5.500M1.500 0V3M3.500 0V3M.5 3H4.500V5L2.500 7V11" stroke="#111" /><path d="M6 5H13V9H6ZM15.500 5H17V8.500H15.500Z" fill="#111" /></Ico>
      <span className="mr-[12px] text-[11.300px]">ENG</span>
      <div className="mr-[19px] w-[58px] text-center text-[11.300px] leading-[18px] tracking-[-0.1px]">09:48<br />06-01-2021</div>
      <Ico w={16} h={16} className="mr-5"><path d="M.7 .7H15.300V12H10.500L8 15L5.500 12H.7Z" stroke="#111" strokeWidth="1.200" /></Ico>
      <div className="mr-1 h-full w-px bg-[#999]" />
    </div>
  );
}

const menus: [string, number][] = [
  ["File", 34], ["Data", 40], ["Worksheet", 72], ["Dashboard", 73], ["Story", 43], ["Analysis", 59], ["Map", 40], ["Format", 54], ["Server", 48], ["Window", 60], ["Help", 40],
];

export default function App() {
  return (
    <div className="relative flex h-[768px] w-[1366px] flex-col overflow-hidden bg-white font-['Noto_Sans',sans-serif] whitespace-pre">
      <div className="flex h-[24px] shrink-0 items-center text-[11.500px] text-black">
        <div className="mr-[5px] ml-[2px] flex h-4 w-4 items-center justify-center border-r border-b border-[#bbb] bg-[#f4f4f4]"><Sparkle s={14} /></div>
        <span className="flex-1 text-[11.300px]">Tableau - LAb1&amp;2 - Tableau license expires in 2 days</span>
        <Ico w={10} h={10} className="mr-[35px]"><path d="M0 5.500H10" stroke="#111" /></Ico>
        <Ico w={10} h={10} className="mr-[36px]"><path d="M.5 2.500H7.500V9.500H.5ZM2.500 2.500V.5H9.500V7.500H7.500" stroke="#111" /></Ico>
        <Ico w={10} h={10} className="mr-5"><path d="M0 0L10 10M10 0L0 10" stroke="#111" strokeWidth="1.200" /></Ico>
      </div>
      <div className="flex h-[19px] shrink-0 items-center pl-2 text-[11.400px] text-black">
        {menus.map(([m, w]) => <span key={m} className="shrink-0" style={{ width: w }}>{m}</span>)}
      </div>
      <Toolbar />
      <div className="flex h-[593px] shrink-0 overflow-hidden">
        <Sidebar />
        <Workspace />
      </div>
      <SheetTabs />
      <StatusBar />
      <Taskbar />
      <ShowMe />
    </div>
  );
}
